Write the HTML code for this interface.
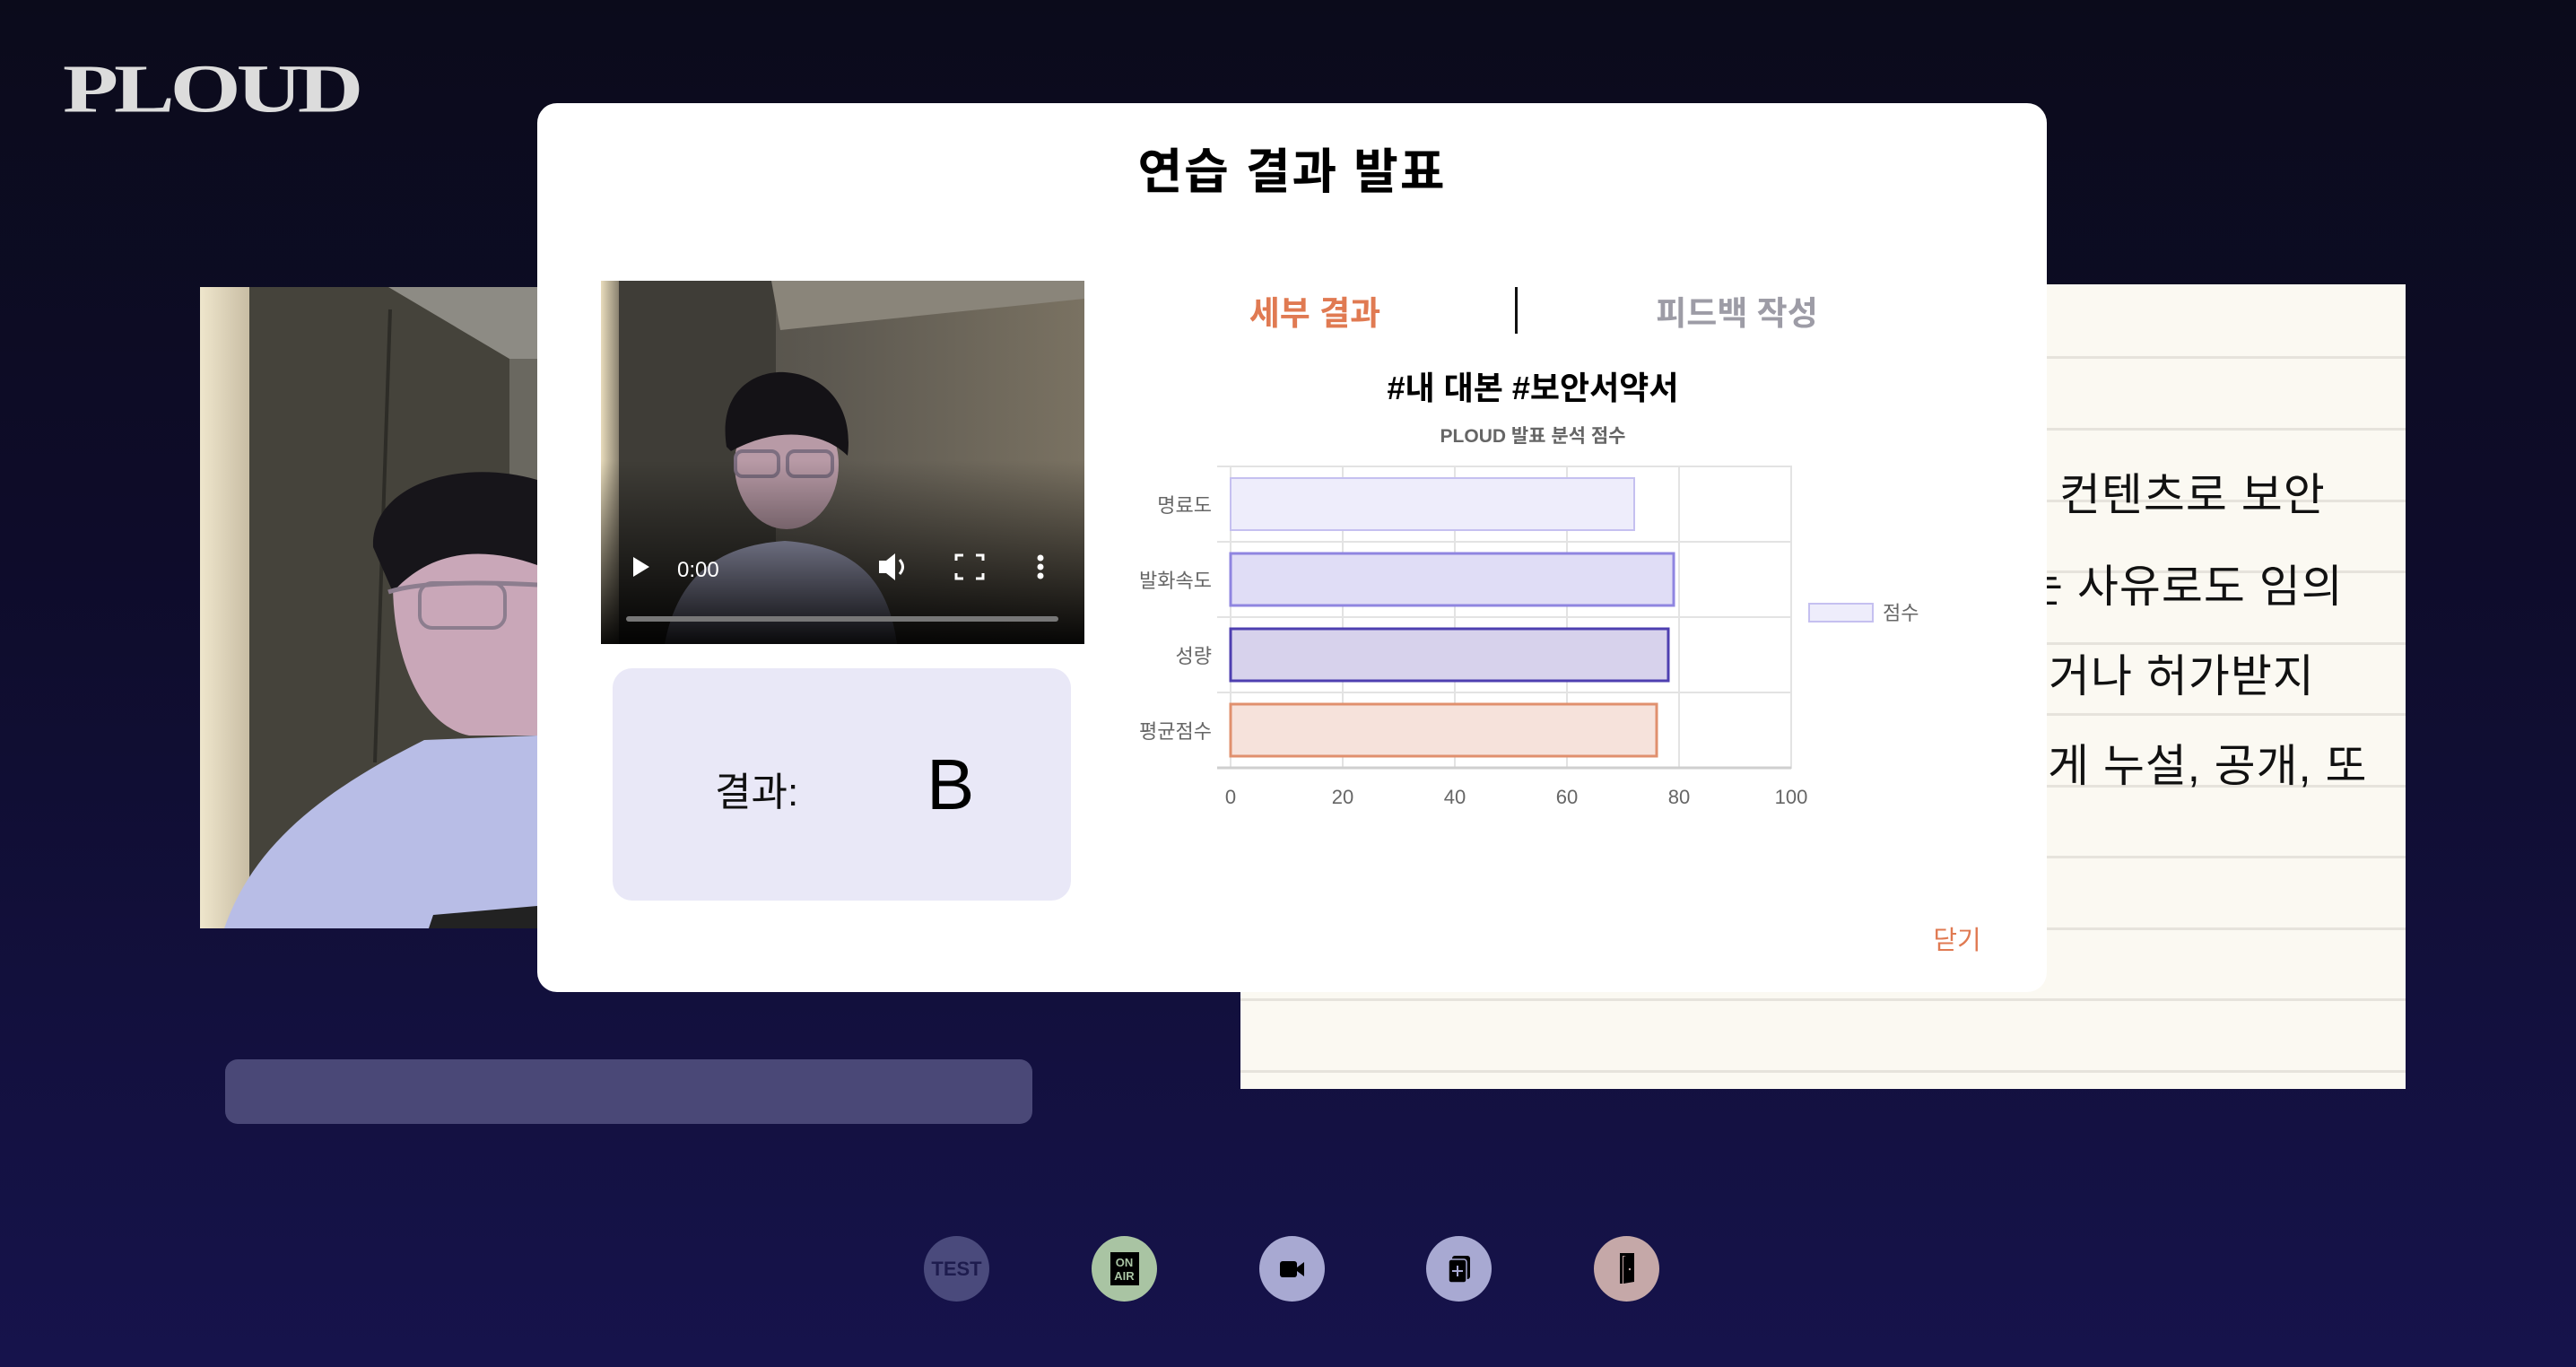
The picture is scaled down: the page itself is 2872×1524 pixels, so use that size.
<!DOCTYPE html>
<html><head><meta charset="utf-8"><style>
*{margin:0;padding:0;box-sizing:border-box}
html,body{width:2872px;height:1524px;overflow:hidden}
body{position:relative;background:linear-gradient(180deg,#0b0b1b 0%,#0e0c2a 40%,#16134c 100%);font-family:"Liberation Sans","Noto Sans CJK KR",sans-serif}
.abs{position:absolute}
.logo{left:70px;top:62px;font-family:"Liberation Serif","Noto Serif CJK SC",serif;font-weight:900;font-size:80px;color:#dcdcdc;letter-spacing:-4px;transform:scale(1.27,0.95);transform-origin:left top;line-height:1}
.paper{left:1383px;top:317px;width:1299px;height:897px;background:#fbf9f2;overflow:hidden}
.paper .ln{position:absolute;left:0;right:0;height:3px;background:#e6e3dc}
.paper .tx{position:absolute;font-size:50px;color:#111;white-space:nowrap;letter-spacing:1px}
.modal{left:599px;top:115px;width:1683px;height:991px;background:#fff;border-radius:22px}
.bar{left:251px;top:1181px;width:900px;height:72px;background:#4a4877;border-radius:14px}
.ic{width:73px;height:73px;border-radius:50%;top:1378px;display:flex;align-items:center;justify-content:center}
</style></head><body>
<div class="abs logo">PLOUD</div>

<!-- left camera -->
<div class="abs" style="left:223px;top:320px;width:376px;height:715px;overflow:hidden">
<svg width="376" height="715" viewBox="0 0 376 715">
<defs><linearGradient id="lw" x1="0" x2="1"><stop offset="0" stop-color="#efe6cc"/><stop offset="1" stop-color="#c8bda4"/></linearGradient></defs>
<rect width="376" height="715" fill="#45433b"/>
<rect x="0" y="0" width="55" height="715" fill="url(#lw)"/>
<polygon points="210,0 376,0 376,80 345,80" fill="#8d8b84"/>
<rect x="345" y="80" width="31" height="200" fill="#6a6860"/>
<line x1="212" y1="25" x2="195" y2="530" stroke="#2d2c27" stroke-width="4"/>
<path d="M27 715 C60 620 140 560 250 505 L376 500 L376 715 Z" fill="#b8bde6"/>
<path d="M215 330 C215 420 250 490 300 500 L376 500 L376 230 C300 230 230 250 215 330Z" fill="#c9a7b8"/>
<path d="M193 290 C190 220 290 190 376 215 L376 310 C320 290 260 290 215 340Z" fill="#17151a"/>
<path d="M210 340 C240 330 300 328 376 332" stroke="#8c7d8e" stroke-width="5" fill="none"/>
<rect x="245" y="330" width="95" height="50" rx="14" fill="none" stroke="#8c7d8e" stroke-width="4"/>
<path d="M260 700 L376 690 L376 715 L255 715Z" fill="#222"/>
</svg></div>

<!-- paper -->
<div class="abs paper">
<div class="ln" style="top:80px"></div><div class="ln" style="top:160px"></div><div class="ln" style="top:240px"></div><div class="ln" style="top:319px"></div><div class="ln" style="top:399px"></div><div class="ln" style="top:478px"></div><div class="ln" style="top:558px"></div><div class="ln" style="top:637px"></div><div class="ln" style="top:717px"></div><div class="ln" style="top:796px"></div><div class="ln" style="top:876px"></div>
<div class="tx" style="left:851px;top:195px">의 컨텐츠로 보안</div>
<div class="tx" style="left:871px;top:297px">는 사유로도 임의</div>
<div class="tx" style="left:854px;top:397px">하거나 허가받지</div>
<div class="tx" style="left:853px;top:497px">에게 누설, 공개, 또</div>
</div>

<div class="abs bar"></div>

<!-- modal -->
<div class="abs modal">
<div class="abs" style="left:0;width:1683px;top:32px;text-align:center;font-size:54px;font-weight:bold;color:#000;letter-spacing:2px">연습 결과 발표</div>

<!-- video -->
<div class="abs" style="left:71px;top:198px;width:539px;height:405px;overflow:hidden">
<svg width="539" height="405" viewBox="0 0 539 405">
<defs>
<linearGradient id="vw" x1="0" x2="1"><stop offset="0" stop-color="#4c4a44"/><stop offset="0.45" stop-color="#5c5850"/><stop offset="1" stop-color="#7a7262"/></linearGradient>
<linearGradient id="vb" x1="0" y1="0" x2="0" y2="1"><stop offset="0" stop-color="#000" stop-opacity="0"/><stop offset="1" stop-color="#000" stop-opacity="0.95"/></linearGradient>
<linearGradient id="vl" x1="0" x2="1"><stop offset="0" stop-color="#e8dcbc"/><stop offset="1" stop-color="#8a8270"/></linearGradient>
</defs>
<rect width="539" height="405" fill="url(#vw)"/>
<rect x="0" y="0" width="20" height="405" fill="url(#vl)"/>
<rect x="20" y="0" width="175" height="405" fill="#3f3d37"/>
<polygon points="190,0 539,0 539,20 200,55" fill="#8a857a"/>
<path d="M71 405 C85 330 130 295 205 290 C280 295 320 330 330 405Z" fill="#b8bad8"/>
<ellipse cx="207" cy="205" rx="58" ry="72" fill="#b89aa6"/>
<path d="M140 185 C130 120 175 100 205 102 C250 105 282 140 275 195 C250 170 200 160 145 190Z" fill="#141216"/>
<rect x="150" y="190" width="48" height="28" rx="8" fill="none" stroke="#7d6e80" stroke-width="4"/>
<rect x="208" y="190" width="50" height="28" rx="8" fill="none" stroke="#7d6e80" stroke-width="4"/>
<rect y="200" width="539" height="205" fill="url(#vb)"/>
<polygon points="36,308 36,330 54,319" fill="#fff"/>
<text x="85" y="330" font-family="Liberation Sans" font-size="24" fill="#fff">0:00</text>
<polygon points="310,312 318,312 328,304 328,334 318,326 310,326" fill="#fff"/>
<path d="M333 311 Q340 319 333 327" stroke="#fff" stroke-width="3" fill="none"/>
<path d="M396 312 v-6 h8 M418 306 h8 v6 M426 326 v6 h-8 M404 332 h-8 v-6" stroke="#fff" stroke-width="3" fill="none"/>
<circle cx="490" cy="309" r="3.5" fill="#fff"/><circle cx="490" cy="319" r="3.5" fill="#fff"/><circle cx="490" cy="329" r="3.5" fill="#fff"/>
<rect x="28" y="374" width="482" height="6" rx="3" fill="#777"/>
</svg></div>

<!-- result box -->
<div class="abs" style="left:84px;top:630px;width:511px;height:259px;background:#e9e8f7;border-radius:22px">
<div class="abs" style="left:114px;top:102px;font-size:44px;color:#111">결과:</div>
<div class="abs" style="left:350px;top:84px;font-size:80px;color:#000">B</div>
</div>

<!-- tabs -->
<div class="abs" style="left:767px;top:204px;width:200px;text-align:center;font-size:37px;font-weight:bold;color:#e07a52">세부 결과</div>
<div class="abs" style="left:1090px;top:205px;width:3px;height:52px;background:#111"></div>
<div class="abs" style="left:1230px;top:204px;width:215px;text-align:center;font-size:37px;font-weight:bold;color:#9d9ca6">피드백 작성</div>

<!-- chart -->
<svg class="abs" style="left:0;top:0" width="1683" height="991" viewBox="0 0 1683 991">
<g font-family="Liberation Sans, Noto Sans CJK KR, sans-serif">
<text x="1110" y="330" text-anchor="middle" font-size="36" font-weight="bold" fill="#000">#내 대본 #보안서약서</text>
<text x="1110" y="378" text-anchor="middle" font-size="21" font-weight="bold" fill="#666">PLOUD 발표 분석 점수</text>
<g stroke="#e3e3e3" stroke-width="2">
<line x1="773" y1="404" x2="773" y2="742"/><line x1="898" y1="404" x2="898" y2="742"/><line x1="1023" y1="404" x2="1023" y2="742"/><line x1="1148" y1="404" x2="1148" y2="742"/><line x1="1273" y1="404" x2="1273" y2="742"/><line x1="1398" y1="404" x2="1398" y2="742"/>
<line x1="758" y1="405" x2="1398" y2="405"/><line x1="758" y1="489" x2="1398" y2="489"/><line x1="758" y1="573" x2="1398" y2="573"/><line x1="758" y1="657" x2="1398" y2="657"/>
</g>
<line x1="758" y1="741" x2="1398" y2="741" stroke="#cfcfcf" stroke-width="3"/>
<rect x="773" y="418" width="450" height="58" fill="#eeedfb" stroke="#c5c0f0" stroke-width="2"/>
<rect x="773" y="502" width="494" height="58" fill="#e0ddf6" stroke="#8f85e0" stroke-width="3"/>
<rect x="773" y="586" width="488" height="58" fill="#d7d2ec" stroke="#4e3fb0" stroke-width="3"/>
<rect x="773" y="670" width="475" height="58" fill="#f6e2db" stroke="#e0906e" stroke-width="3"/>
<g font-size="22" fill="#666" text-anchor="end">
<text x="752" y="456">명료도</text><text x="752" y="540">발화속도</text><text x="752" y="624">성량</text><text x="752" y="708">평균점수</text>
</g>
<g font-size="22" fill="#666" text-anchor="middle">
<text x="773" y="781">0</text><text x="898" y="781">20</text><text x="1023" y="781">40</text><text x="1148" y="781">60</text><text x="1273" y="781">80</text><text x="1398" y="781">100</text>
</g>
<rect x="1418" y="558" width="71" height="20" fill="#eeedfb" stroke="#c5c0f0" stroke-width="2"/>
<text x="1500" y="576" font-size="22" fill="#666">점수</text>
<text x="1583" y="943" text-anchor="middle" font-size="29" fill="#e07a52">닫기</text>
</g></svg>
</div>

<!-- bottom icons -->
<div class="abs ic" style="left:1030px;background:#4a4a7c"><span style="font-size:22px;font-weight:bold;color:#1e1c4e">TEST</span></div>
<div class="abs ic" style="left:1217px;background:#a9c4a3"><div style="width:32px;height:37px;background:#000;color:#a9c4a3;font-size:13px;line-height:15px;text-align:center;font-weight:bold;padding-top:4px">ON<br>AIR</div></div>
<div class="abs ic" style="left:1404px;background:#a8a9d2"><svg width="32" height="24" viewBox="0 0 32 24"><rect x="2" y="3" width="19" height="18" rx="3" fill="#000"/><polygon points="21,10 29,4 29,20 21,14" fill="#000"/></svg></div>
<div class="abs ic" style="left:1590px;background:#a8a9d2"><svg width="32" height="36" viewBox="0 0 32 36"><rect x="8" y="3" width="20" height="26" rx="3" fill="#000"/><rect x="4" y="7" width="20" height="26" rx="3" fill="#000" stroke="#a8a9d2" stroke-width="1.5"/><path d="M14 14v12M8 20h12" stroke="#a8a9d2" stroke-width="2"/></svg></div>
<div class="abs ic" style="left:1777px;background:#c5a8a8"><svg width="24" height="40" viewBox="0 0 24 40"><rect x="4" y="4" width="3" height="32" fill="#000"/><polygon points="8,6 20,2 20,34 8,36" fill="#000"/><rect x="4" y="2" width="16" height="3" fill="#000"/><circle cx="15" cy="20" r="1.2" fill="#c5a8a8"/></svg></div>
</body></html>
